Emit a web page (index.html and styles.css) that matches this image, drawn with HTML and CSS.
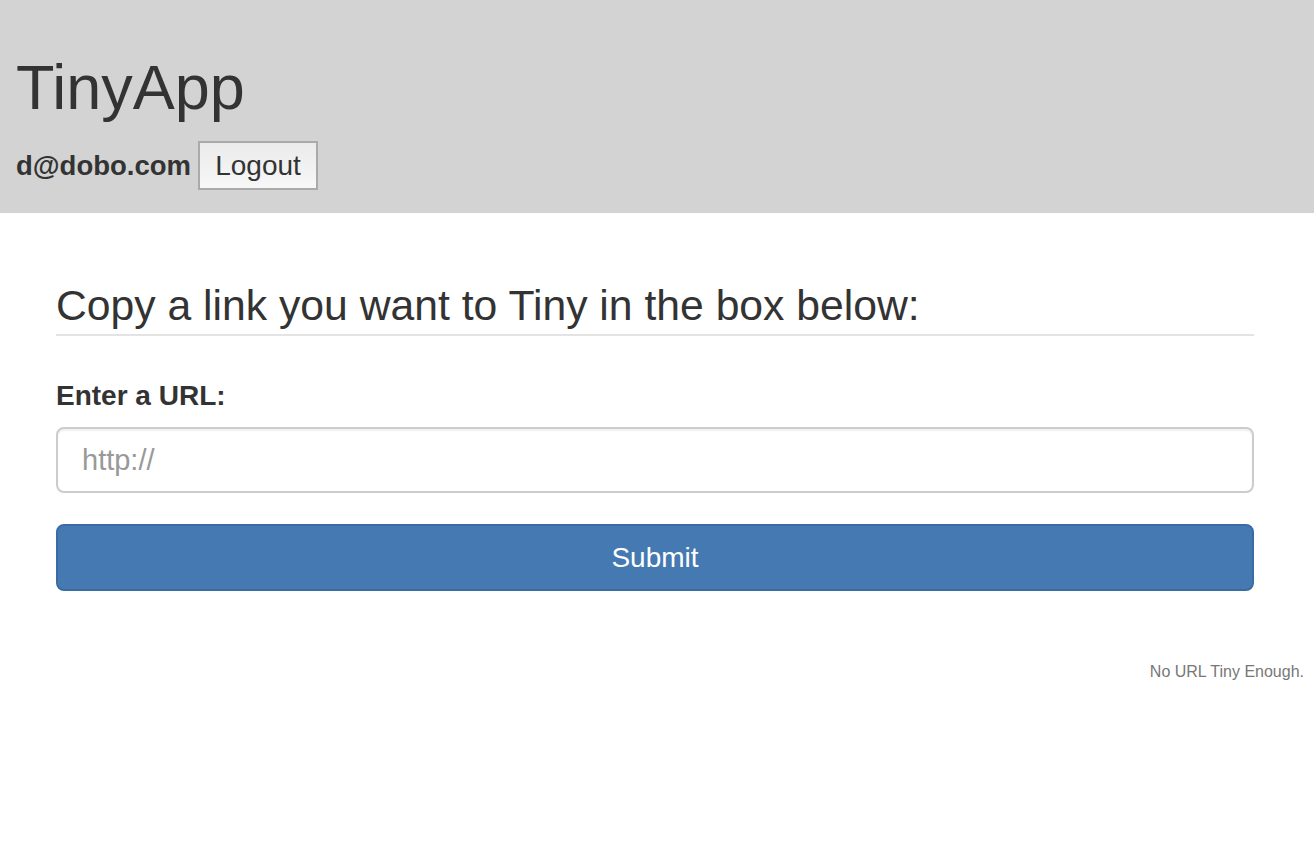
FILE: index.html
```html
<!DOCTYPE html>
<html>
<head>
<meta charset="utf-8">
<link rel="stylesheet" href="styles.css">
</head>
<body>
<header class="top">
  <h1 class="brand">TinyApp</h1>
  <div class="user-row">
    <span class="email">d@dobo.com</span>
    <button class="logout" type="button">Logout</button>
  </div>
</header>
<main class="content">
  <h2 class="page-title">Copy a link you want to Tiny in the box below:</h2>
  <form class="url-form">
    <label class="field-label" for="url">Enter a URL:</label>
    <input class="url-input" id="url" type="text" placeholder="http://">
    <button class="submit" type="button">Submit</button>
  </form>
</main>
<footer class="foot">No URL Tiny Enough.</footer>
</body>
</html>
```

FILE: styles.css
```css
html, body {
  margin: 0;
  padding: 0;
  background: #fff;
  color: #333;
  font-family: "Liberation Sans", Arial, Helvetica, sans-serif;
}

.top {
  box-sizing: border-box;
  height: 213px;
  background: #d3d3d3;
  padding: 56px 16px 0;
}

.brand {
  margin: 0;
  font-size: 63px;
  line-height: 63px;
  font-weight: normal;
  color: #333;
}

.user-row {
  display: flex;
  align-items: center;
  gap: 7px;
  margin-top: 22px;
}

.email {
  font-size: 27.5px;
  font-weight: bold;
  color: #333;
}

.logout {
  box-sizing: border-box;
  height: 49px;
  width: 120px;
  padding: 0;
  font-family: inherit;
  font-size: 28px;
  color: #333;
  border: 2px solid #aaa;
  background: linear-gradient(#ebebeb, #f7f7f7);
  border-radius: 0;
}

.content {
  padding: 71px 60px 0 56px;
}

.page-title {
  margin: 0;
  font-size: 42.7px;
  line-height: 43px;
  font-weight: normal;
  padding-bottom: 7px;
  border-bottom: 2px solid #e3e3e3;
}

.url-form {
  display: flex;
  flex-direction: column;
}

.field-label {
  margin-top: 46px;
  font-size: 28px;
  line-height: 28px;
  font-weight: bold;
}

.url-input {
  box-sizing: border-box;
  margin-top: 17px;
  height: 66px;
  padding: 0 24px;
  border: 2px solid #ccc;
  border-radius: 8px;
  font-family: inherit;
  font-size: 29px;
  color: #555;
  box-shadow: inset 0 2px 2px rgba(0,0,0,0.06);
  outline: none;
}

.url-input::placeholder {
  color: #999;
}

.submit {
  box-sizing: border-box;
  margin-top: 31px;
  height: 67px;
  border: 2px solid #3a6ca3;
  border-radius: 8px;
  background: #4479b1;
  color: #fff;
  font-family: inherit;
  font-size: 28px;
}

.foot {
  margin-top: 73px;
  padding-right: 10px;
  text-align: right;
  font-size: 16px;
  line-height: 16px;
  color: #777;
}
```
